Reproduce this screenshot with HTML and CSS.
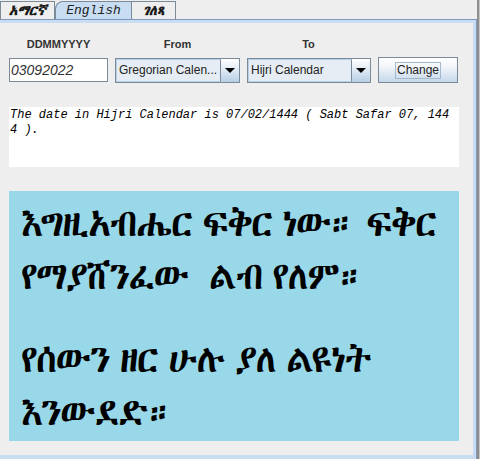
FILE: index.html
```html
<!DOCTYPE html>
<html>
<head>
<meta charset="utf-8">
<link rel="stylesheet" href="styles.css">
</head>
<body>
<div class="app">
  <div class="pane">
    <div class="tabstrip">
      <div class="tab tab-first"><span class="tab-label">አማርኛ</span></div>
      <div class="tab tab-selected"><span class="tab-label tab-latin">English</span></div>
      <div class="tab"><span class="tab-label">ገለጻ</span></div>
    </div>
    <div class="content">
      <div class="form">
        <div class="label">DDMMYYYY</div>
        <div class="label">From</div>
        <div class="label">To</div>
        <div></div>
        <div class="field">03092022</div>
        <div class="combo"><span class="combo-text">Gregorian Calen...</span><span class="combo-arrow"><span class="tri"></span></span></div>
        <div class="combo"><span class="combo-text">Hijri Calendar</span><span class="combo-arrow"><span class="tri"></span></span></div>
        <div class="button"><span class="focus">Change</span></div>
      </div>
      <div class="result">The date in Hijri Calendar is 07/02/1444 ( Sabt Safar 07, 1444 ).</div>
      <div class="amharic">
        <p class="am-p">እግዚአብሔር ፍቅር ነው። ፍቅር የማያሸንፈው&nbsp; ልብ የለም።</p>
        <p class="am-p">የሰውን ዘር ሁሉ ያለ ልዩነት እንውደድ።</p>
      </div>
    </div>
  </div>
  <div class="edge"></div>
</div>
</body>
</html>
```
FILE: styles.css
```css
html, body {
  margin: 0;
  padding: 0;
  background: #eeeeee;
}
body {
  width: 480px;
  height: 459px;
  overflow: hidden;
  font-family: "Liberation Sans", Arial, sans-serif;
}
.app {
  display: flex;
  width: 480px;
  height: 459px;
}
.pane {
  width: 477px;
  display: flex;
  flex-direction: column;
}
.edge {
  width: 3px;
  background: linear-gradient(to right, #8e8e8e 0, #8e8e8e 2px, #c4c4c4 2px);
}
.tabstrip {
  height: 19px;
  display: flex;
  align-items: flex-end;
}
.tab {
  height: 18px;
  box-sizing: border-box;
  border: 1px solid #7a8a99;
  border-bottom: none;
  border-left: none;
  background: #eeeeee;
  display: flex;
  align-items: center;
  justify-content: center;
  padding: 0 6px;
  font-family: "Abyssinica SIL", "Noto Sans Ethiopic", "FreeSerif", "DejaVu Sans", serif;
  font-size: 14px;
  font-weight: bold;
  font-style: italic;
  color: #1a1a1a;
}
.tab-first {
  width: 55px;
  border-left: 1px solid #7a8a99;
}
.tab-selected {
  width: 77px;
  background: #c8ddf2;
  border-left: 1px solid #7a8a99;
  border-top-left-radius: 8px 8px;
}
.tab-latin {
  font-family: "Liberation Mono", "Courier New", monospace;
  font-size: 13px;
  font-weight: normal;
  color: #222;
}
.tab:last-child {
  width: 44px;
}
.content {
  flex: 1;
  border-top: 1px solid #7f96bd;
  border-right: 1px solid #7f96bd;
  background: #eeeeee;
  box-shadow: inset 0 3px 0 #c8ddf2, inset -3px 0 0 #c8ddf2, inset 0 -4px 0 #c8ddf2;
  padding: 3px 0 0 9px;
  display: flex;
  flex-direction: column;
}
.form {
  display: grid;
  grid-template-columns: 99px 125px 124px 80px;
  column-gap: 7px;
  row-gap: 7px;
  margin-top: 15px;
}
.form > :nth-child(3) { margin-left: -1px; }
.label {
  text-align: center;
  font-size: 11px;
  font-weight: bold;
  color: #333333;
  line-height: 13px;
}
.field {
  height: 24px;
  box-sizing: border-box;
  border: 1px solid #7a8a99;
  background: #ffffff;
  font-style: italic;
  font-size: 14px;
  color: #333333;
  padding: 3px 1px;
  line-height: 16px;
}
.combo {
  height: 25px;
  box-sizing: border-box;
  border: 1px solid #7a8a99;
  display: flex;
  background: #eeeeee;
}
.combo-text {
  flex: 1;
  border: 1px solid #b8cfe5;
  border-right: 1px solid #7a8a99;
  background: #e6ecf3;
  font-size: 12px;
  color: #222222;
  line-height: 21px;
  padding-left: 2px;
  white-space: nowrap;
  overflow: hidden;
}
.combo-arrow {
  width: 18px;
  background: linear-gradient(to bottom, #ffffff 0%, #dde8f3 50%, #b8cfe5 100%);
  display: flex;
  align-items: center;
  justify-content: center;
}
.tri {
  width: 0;
  height: 0;
  border-left: 5px solid transparent;
  border-right: 5px solid transparent;
  border-top: 5px solid #000000;
}
.button {
  height: 26px;
  margin-top: -1px;
  box-sizing: border-box;
  border: 1px solid #7a8a99;
  background: linear-gradient(to bottom, #ffffff 0%, #f3f6fa 35%, #dde8f3 65%, #c6d8ea 100%);
  display: flex;
  align-items: center;
  justify-content: center;
}
.focus {
  border: 1px solid #a3b8cc;
  font-size: 12px;
  color: #222222;
  line-height: 15px;
  padding: 0 1px;
}
.result {
  margin-top: 24px;
  width: 450px;
  height: 60px;
  box-sizing: border-box;
  background: #ffffff;
  font-family: "Liberation Mono", "Courier New", monospace;
  font-style: italic;
  font-size: 12px;
  line-height: 15px;
  color: #000000;
  padding: 1px 7px 0 1px;
  word-break: break-all;
}
.amharic {
  margin-top: 24px;
  width: 450px;
  height: 250px;
  box-sizing: border-box;
  background: #99d8e9;
  padding: 6px 8px 0 12px;
  font-family: "Abyssinica SIL", "Noto Sans Ethiopic", "FreeSerif", "DejaVu Sans", serif;
  font-size: 38px;
  letter-spacing: -1.5px;
  word-spacing: -5px;
  line-height: 53px;
  color: #000000;
}
.am-p {
  margin: 0 0 30px 0;
}
```
